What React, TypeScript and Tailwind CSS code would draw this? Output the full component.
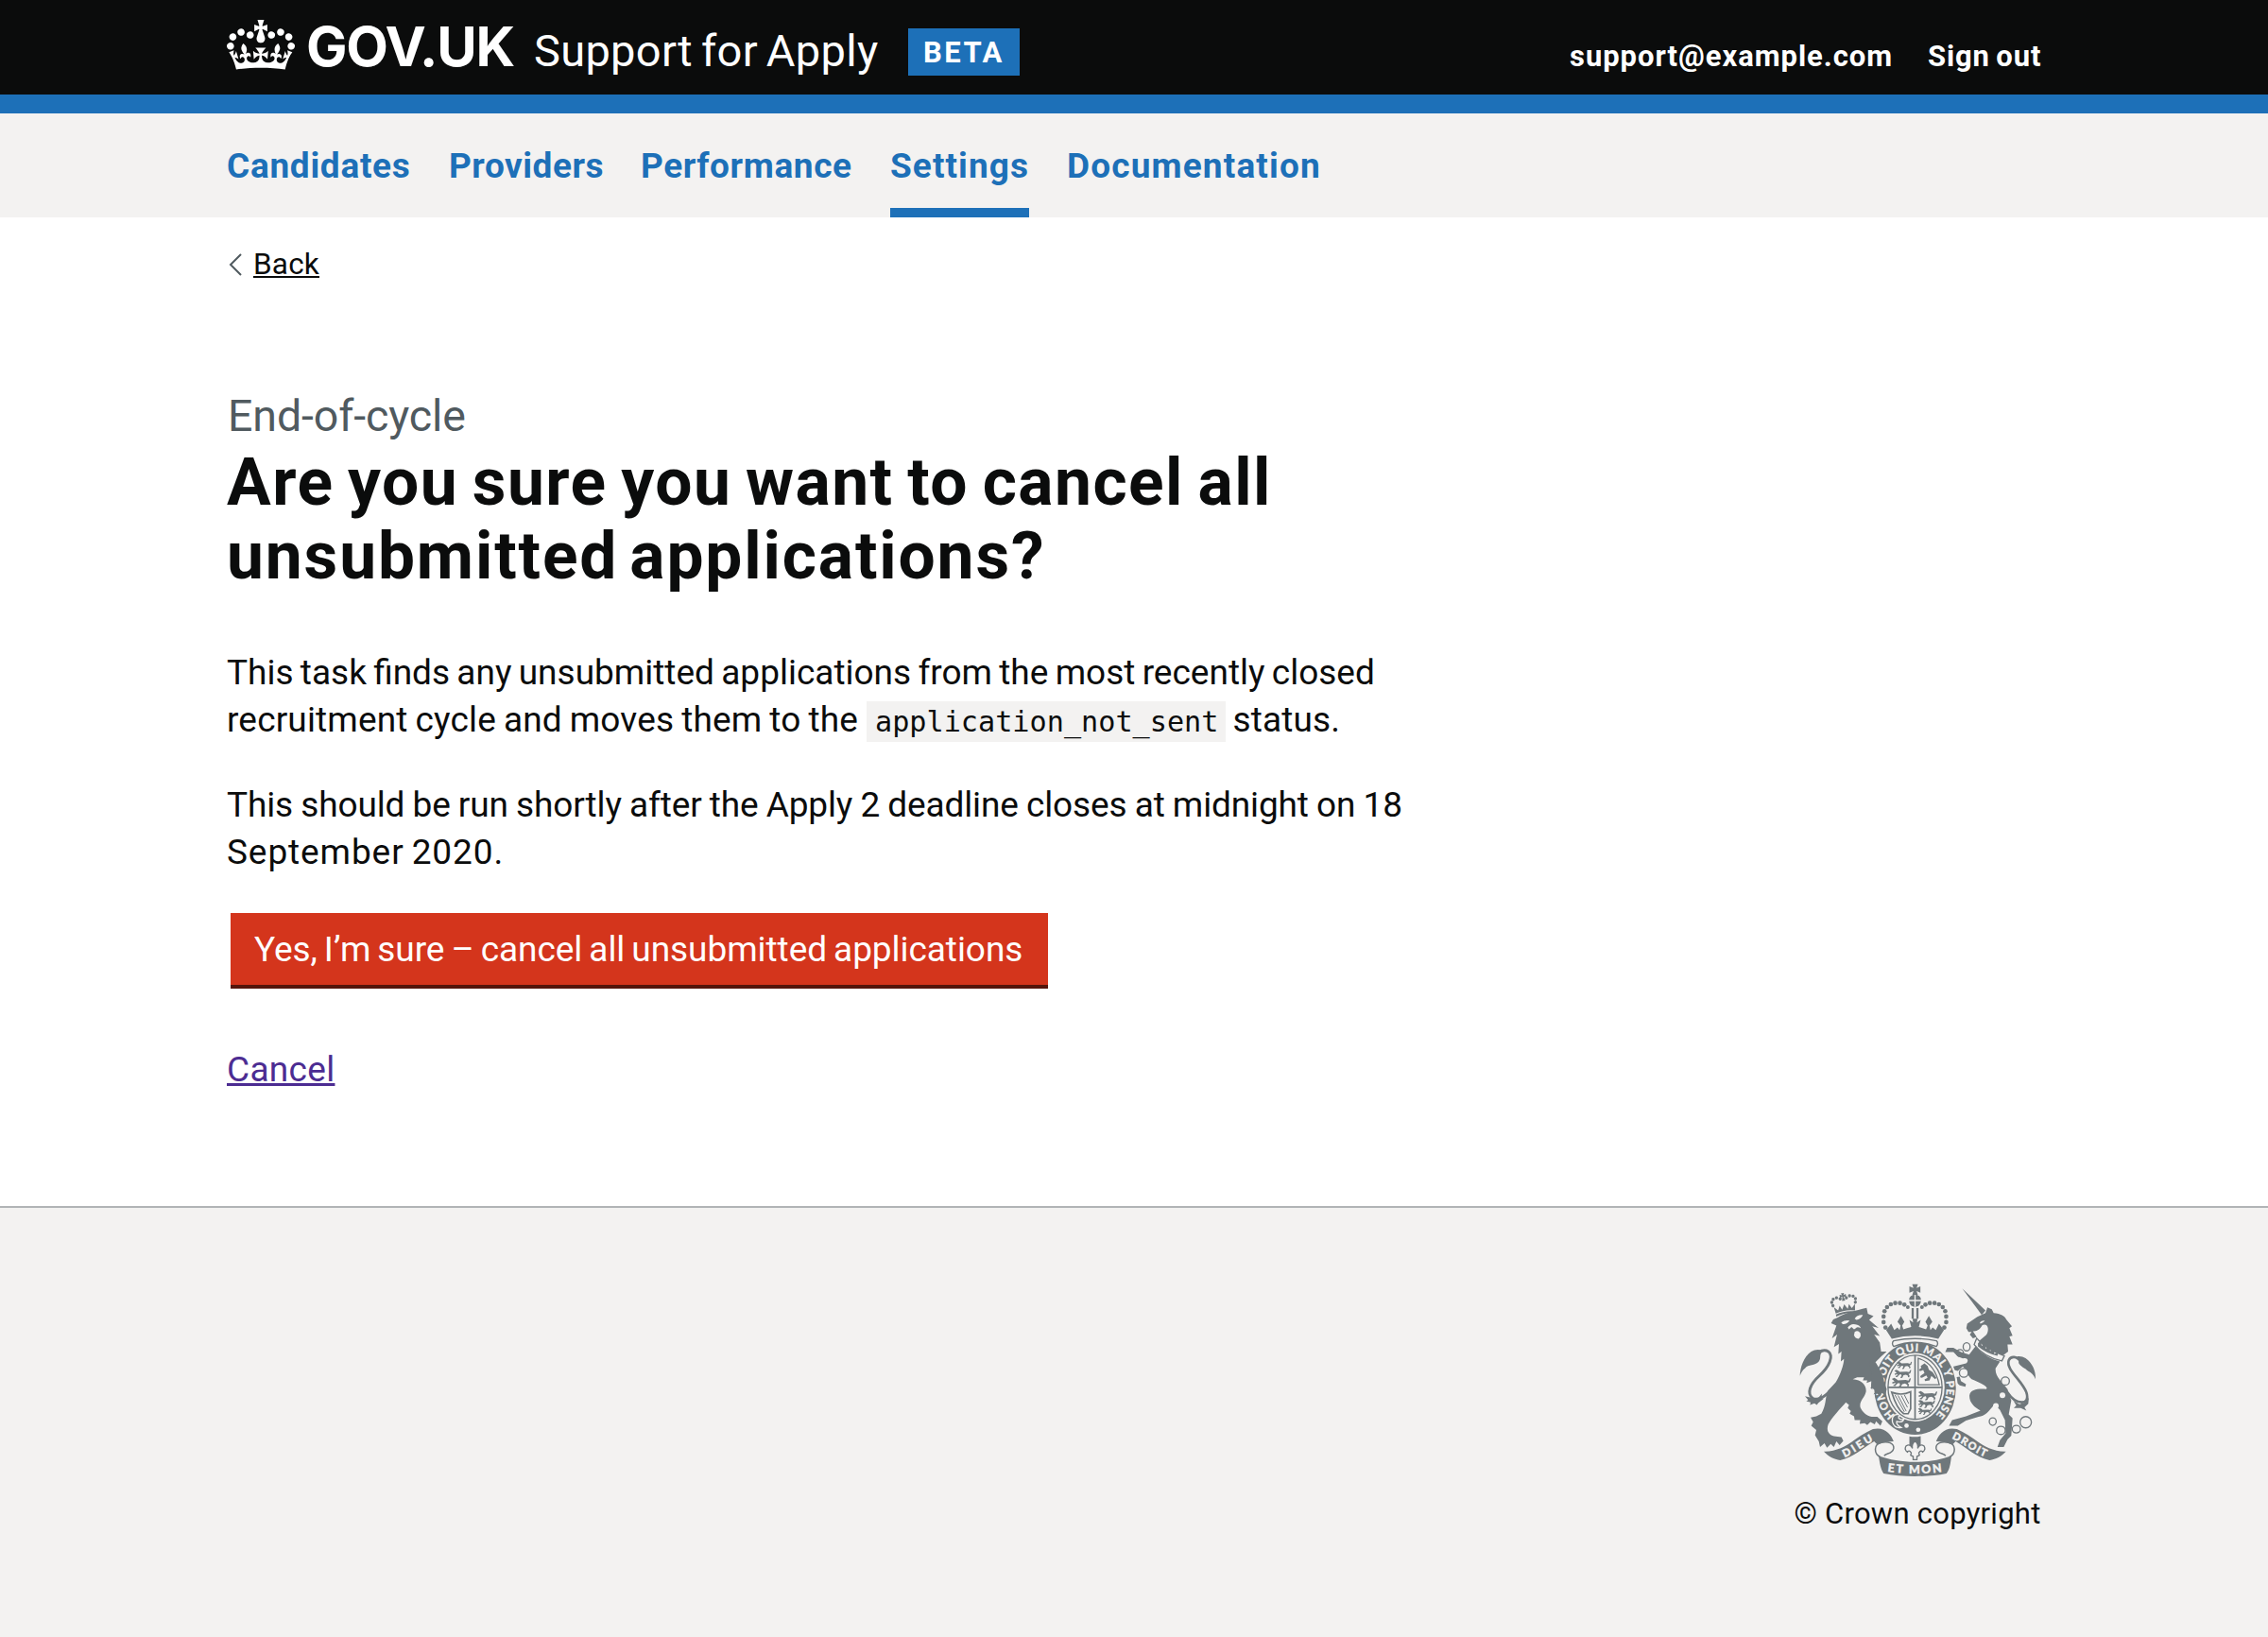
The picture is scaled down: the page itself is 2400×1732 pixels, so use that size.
import type { ReactNode } from "react";

const CROWN =
  "M25 30.2c3.5 1.5 7.7-.2 9.1-3.7 1.5-3.6-.2-7.8-3.9-9.2-3.6-1.4-7.6.3-9.1 3.9-1.4 3.5.3 7.5 3.9 9zM9 39.5c3.6 1.5 7.8-.2 9.2-3.7 1.5-3.6-.2-7.8-3.9-9.1-3.6-1.5-7.6.2-9.1 3.8-1.4 3.5.3 7.5 3.8 9zM4.4 57.2c3.5 1.5 7.7-.2 9.1-3.8 1.5-3.6-.2-7.7-3.9-9.1-3.5-1.5-7.6.3-9.1 3.8-1.4 3.5.3 7.6 3.9 9.1zm38.3-21.4c3.5 1.5 7.7-.2 9.1-3.8 1.5-3.6-.2-7.7-3.9-9.1-3.6-1.5-7.6.3-9.1 3.8-1.3 3.6.4 7.7 3.9 9.1zm64.4-5.6c-3.6 1.5-7.8-.2-9.1-3.7-1.5-3.6.2-7.8 3.8-9.2 3.6-1.4 7.7.3 9.2 3.9 1.3 3.5-.4 7.5-3.9 9zm15.9 9.3c-3.6 1.5-7.7-.2-9.1-3.7-1.5-3.6.2-7.8 3.7-9.1 3.6-1.5 7.7.2 9.2 3.8 1.5 3.5-.3 7.5-3.8 9zm4.7 17.7c-3.6 1.5-7.8-.2-9.2-3.8-1.5-3.6.2-7.7 3.9-9.1 3.6-1.5 7.7.3 9.2 3.8 1.3 3.5-.4 7.6-3.9 9.1zM89.3 35.8c-3.6 1.5-7.8-.2-9.2-3.8-1.4-3.6.2-7.7 3.9-9.1 3.6-1.5 7.7.3 9.2 3.8 1.4 3.6-.3 7.7-3.9 9.1zM69.7 17.7l8.9 4.7V9.3l-8.9 2.8c-.2-.3-.5-.6-.9-.9L72.4 0H59.6l3.5 11.2c-.3.3-.6.5-.9.9l-8.8-2.8v13.1l8.8-4.7c.3.3.6.7.9.9l-5 15.4v.1c-.2.8-.4 1.6-.4 2.4 0 4.1 3.1 7.5 7 8.1h.2c.3 0 .7.1 1 .1.4 0 .7 0 1-.1h.2c4-.6 7.1-4.1 7.1-8.1 0-.8-.1-1.7-.4-2.4V34l-5.1-15.4c.4-.2.7-.6 1-.9zM66 92.8c16.9 0 32.8 1.1 47.1 3.2 4-16.9 8.9-26.7 14-33.5l-9.6-3.4c1 4.9 1.1 7.2 0 10.2-1.5-1.4-3-4.3-4.2-8.7L108.6 76c2.8-2 5-3.2 7.5-3.3-4.4 9.4-10 11.9-13.6 11.2-4.3-.8-6.3-4.6-5.6-7.9 1-4.7 5.7-5.9 8-.5 4.3-8.7-3-11.4-7.6-8.8 7.1-7.2 7.9-13.5 2.1-21.1-8 6.1-8.1 12.3-4.5 20.8-4.7-5.4-12.1-2.5-9.5 6.2 3.4-5.2 7.9-2 7.2 3.1-.6 4.3-6.4 7.8-13.5 7.2-10.3-.9-10.9-8-11.2-13.8 2.5-.5 7.1 1.8 11 7.3L80.2 60c-4.1 4.4-8 5.3-12.3 5.4 1.4-4.4 8-11.6 8-11.6H55.5s6.4 7.2 7.9 11.6c-4.2-.1-8-1-12.3-5.4l1.4 16.4c3.9-5.5 8.5-7.7 10.9-7.3-.3 5.8-.9 12.8-11.1 13.8-7.2.6-12.9-2.9-13.5-7.2-.7-5 3.8-8.3 7.1-3.1 2.7-8.7-4.6-11.6-9.4-6.2 3.7-8.5 3.6-14.7-4.6-20.8-5.8 7.6-5 13.9 2.2 21.1-4.7-2.6-11.9.1-7.7 8.8 2.3-5.5 7.1-4.2 8.1.5.7 3.3-1.3 7.1-5.7 7.9-3.5.7-9-1.8-13.5-11.2 2.5.1 4.7 1.3 7.5 3.3l-4.7-15.4c-1.2 4.4-2.7 7.2-4.3 8.7-1.1-3-.9-5.3 0-10.2l-9.5 3.4c5 6.9 9.9 16.7 14 33.5 14.8-2.1 30.8-3.2 47.7-3.2z";

const INK = "#6f777b";
const PAPER = "#f3f2f1";

const ARCH_DOTS = [
  [344, 192, 7], [338, 175, 7], [338, 157, 7], [341, 140, 7], [349, 127, 7],
  [361, 118, 7], [375, 114, 7], [390, 114, 7], [404, 119, 7], [415, 127, 6],
];

const CHAIN = [
  [602, 253, 11, 13], [581, 273, 11, 11], [593, 336, 14, 14], [725, 362, 13, 13],
  [685, 491, 11, 12], [711, 519, 14, 13], [760, 515, 13, 12], [790, 493, 18, 18],
];

/* Small walking lion used in the quarters of the shield. */
function Passant({ x, y, s = 1 }: { x: number; y: number; s?: number }) {
  return (
    <path
      transform={`translate(${x} ${y}) scale(${s})`}
      d="M2 3l7-3 6 3 5 4 22-1 8 2 4-7 3 1-3 10-6 2 4 6-2 5-4-1 1-4-7-4-8 2-4 8-6 1 1-4 3-2-2-6-6 1-6 8-6-1 1-3 4-1 2-5-9 3-1-4 7-3z"
    />
  );
}

function RoyalArms() {
  return (
    <svg viewBox="70 52 754 616" className="h-[205px] w-[251px]" fill={INK} role="img" aria-label="Royal arms">
      {/* lion's crown */}
      <g transform="rotate(-9 213 120)">
        <path d="M182 143L179 122L191 134L198 120L204 134L213 118L222 134L228 120L235 134L247 122L244 143Q213 134 182 143Z" />
        <path d="M182 153Q213 142 244 153L244 146Q213 137 182 146Z" />
        {[[177, 117], [175, 106], [181, 97], [192, 94], [203, 99], [223, 99], [234, 94], [245, 97], [251, 106], [249, 117]].map(([x, y]) => (
          <circle key={x + "-" + y} cx={x} cy={y} r="5" />
        ))}
        <path d="M208 82h10l-3 7 8-3v10l-8-3 3 14h-10l3-14-8 3v-10l8 3z" />
      </g>

      {/* lion's tail */}
      <path d="M204 352C170 395 138 430 113 417C92 402 104 372 134 345C166 316 180 282 162 268C150 260 132 266 118 280" fill="none" stroke={INK} strokeWidth="9" />
      <path d="M72 346C72 320 84 284 108 268C120 260 140 260 148 268C130 272 142 288 132 300C120 314 98 308 88 322C80 328 76 336 72 346Z" />
      <path d="M88 410L104 414L128 418L142 402L140 418L148 418L130 432L126 438L118 433L104 438L106 430L92 426L98 422Z" />

      {/* lion */}
      <path d="M171 178L178 166L192 160C210 146 250 138 284 129L288 148L306 156L292 168L322 193L302 188L326 219L308 214L326 240L330 268L348 268L330 284L312 302C322 318 334 336 340 360L347 392L343 410L331 402L326 414L316 404L304 405L312 396L296 384L306 376L298 374L306 360L284 368L286 360L272 360L276 350L254 350L240 356C270 358 284 376 282 396C278 416 260 424 264 446C270 460 284 474 300 476L318 476L334 490L328 504L314 490L310 500L296 492L286 502L278 496L262 498L264 486L246 486L244 474L230 466L234 458L224 448L228 438L218 430C200 450 172 480 162 500C154 522 166 536 186 538L204 540L210 552L198 566L188 554L180 572L170 562L158 574L150 560L136 572L132 554L120 534L124 518L108 504L114 492L106 478L124 474L140 466C156 440 152 416 160 394L186 366C200 344 212 310 212 292L202 300L204 268L194 276L196 244L180 254L190 214L174 226L188 186Z" />
      <g fill={PAPER}>
        <path d="M203 176Q216 166 230 170Q222 182 208 181ZM246 164Q254 150 272 152Q268 164 252 168Z" />
        <path d="M224 192Q234 178 248 182Q262 184 266 194Q254 188 250 194L244 198L236 190L228 198Z" />
        <path d="M246 206Q256 198 264 210Q268 222 258 228Q246 226 244 216Z" />
      </g>

      {/* unicorn's tail */}
      <path d="M732 398C760 440 806 440 792 398C778 360 726 326 736 296C742 282 762 282 774 300" fill="none" stroke={INK} strokeWidth="8" />
      <path d="M762 284C794 278 824 318 821 356C814 336 800 334 790 324C776 316 764 308 768 298Z" />
      <path d="M750 424L770 436L790 430L800 414L798 434L786 446L792 456L774 448L752 448L760 440Z" />

      {/* unicorn */}
      <path d="M588 68L662 138L650 152Z" />
      <path d="M601 194L604 180L636 158L662 146L668 128L682 134L688 146C710 148 724 156 728 166L746 188L738 194L748 218L738 220L748 246L732 246L734 268L718 280C690 276 660 258 640 236L664 216C676 200 670 176 652 184C644 200 632 204 622 204L634 222L622 226L612 214L618 206L608 206Z" />
      <path d="M644 176Q650 168 660 170Q654 178 646 180Z" fill={PAPER} />
      <path d="M634 226C654 252 684 268 722 282L714 298C680 290 646 272 626 246Z" fill={PAPER} stroke={INK} strokeWidth="4" />
      <path d="M638 242l8-8 4 16 9-8 4 17 10-8 4 16 11-7 2 16 12-6-2 12q-36-8-62-30z" />
      <path d="M630 252C654 280 684 294 708 300L694 322C692 350 716 364 732 388L744 424L736 468L748 480L744 536L732 548L720 572L700 572L708 550L726 528L724 486L708 454L690 436C674 458 660 474 640 476L600 488L574 504L546 504L556 486L600 474L646 456C626 446 610 430 611 408C614 388 640 386 664 388C676 380 640 366 618 356C604 346 602 326 590 316L574 330L560 326L566 350L580 348L584 362L600 372L598 380L580 376L560 358L550 336L552 318L600 306C610 298 606 286 590 290L574 284L560 270L534 270L540 256L560 256L584 270L610 278Z" />
      <circle cx="716" cy="407" r="9" fill={PAPER} />
      <circle cx="695" cy="441" r="9" fill={PAPER} />
      {CHAIN.map(([x, y, rx, ry]) => (
        <ellipse key={x} cx={x} cy={y} rx={rx} ry={ry} fill={x === 593 || x === 725 ? PAPER : "none"} stroke={INK} strokeWidth="4" />
      ))}

      {/* garter */}
      <ellipse cx="438" cy="385" rx="136" ry="154" fill={PAPER} />
      <ellipse cx="438" cy="385" rx="130" ry="148" />
      <ellipse cx="438" cy="382" rx="94" ry="109" fill={PAPER} />
      <path id="garter" d="M373.7 471A100 115 0 0 1 438 268A100 115 0 0 1 495.4 477.2" fill="none" />
      <text fill={PAPER} stroke={PAPER} strokeWidth="1.2" fontSize="34" className="font-['Lato'] font-bold">
        <textPath href="#garter" textLength="530">HONI SOIT QUI MAL Y PENSE</textPath>
      </text>
      <circle cx="448" cy="517" r="7" fill={PAPER} />
      <circle cx="411" cy="504" r="7" fill={PAPER} />
      <path d="M382 468Q362 470 366 492Q372 514 394 510Q376 500 380 490Q398 496 402 484Q392 486 386 480Q384 474 390 470Z" fill={INK} stroke={PAPER} strokeWidth="4" />

      {/* lion's forepaw resting on the garter */}
      <path d="M292 300L314 306C326 324 338 344 340 366L348 388L343 408L333 400L326 412L318 402L306 404L314 394L298 382L300 340Z" />

      {/* shield */}
      <ellipse cx="438" cy="382" rx="86" ry="102" fill="none" stroke={INK} strokeWidth="4" />
      <path d="M438 280V484M352 382H524" stroke={INK} strokeWidth="5" />
      <Passant x={378} y={300} s={0.88} />
      <Passant x={370} y={326} s={0.98} />
      <Passant x={362} y={352} s={1.1} />
      <Passant x={446} y={394} s={1.1} />
      <Passant x={446} y={422} s={0.98} />
      <Passant x={446} y={448} s={0.8} />
      <path d="M448 290Q500 304 515 374H448Z" fill="none" stroke={INK} strokeWidth="4" />
      <path d="M456 314l12-8 10 8 4 12 12 8 12 18-4 4-12-10-6 14-14 2-2-5 10-5-4-8-14 8-6-2 2-5 12-8-4-10-10 4-4-5 8-6z" />
      <path d="M364 398Q396 410 424 396L424 450L416 466L402 466Q380 450 364 398Z" fill="none" stroke={INK} strokeWidth="5" />
      <path d="M374 406L404 460M384 408L410 458M394 408L414 446M404 406L418 434" stroke={INK} strokeWidth="3" />

      {/* centre crown */}
      <path d="M429 54h18l-4 12 12-5v20l-12-5 4 13h-18l4-13-13 5V61l13 5z" />
      <path d="M419 104a19 17 0 0 1 38 0zM419 108h38q-3 18-19 18t-19-18z" />
      <path d="M436 88h4v38h-4z" fill={PAPER} />
      <path d="M427 130h7v34h-7zM442 130h7v34h-7z" />
      {ARCH_DOTS.map(([x, y, r]) => (
        <g key={y + x}>
          <circle cx={x} cy={y} r={r} />
          <circle cx={875 - x} cy={y} r={r} />
        </g>
      ))}
      <path d="M346 200L362 180L372 200L382 192L389 200L392 186L382 174L393 155L404 174L397 186L401 198L412 194L426 190L420 168L432 176L430 164H446L444 176L456 168L450 190L462 194L473 198L478 186L471 174L482 155L493 174L484 186L487 200L494 192L504 200L514 180L530 200L512 228Q438 208 364 228Z" />
      <path d="M370 234Q438 220 506 234Q514 242 506 252Q438 226 370 252Q362 242 370 234Z" fill={PAPER} stroke={INK} strokeWidth="4" />

      {/* pendant */}
      <path d="M420 538Q438 542 456 537V572H420Z" />
      <path d="M438 552Q450 564 446 576Q454 560 466 568Q474 580 462 588Q458 580 450 590L452 598L444 602V612H432V602L424 598L426 590Q418 580 414 588Q402 580 410 568Q422 560 430 576Q426 564 438 552Z" fill={PAPER} stroke={INK} strokeWidth="4" />

      {/* motto scroll */}
      {[0, 1].map((side) => (
        <g key={side} transform={side ? "translate(875 0) scale(-1 1)" : undefined}>
          <path d="M328 604C306 594 306 562 330 558C352 552 372 560 370 576C366 596 344 590 340 600" fill={PAPER} stroke={INK} strokeWidth="4.5" />
          <path d="M148 586C214 588 252 536 304 515C342 506 362 532 370 554L340 556L318 564L308 554C276 572 242 606 200 614C180 610 162 602 148 586Z" />
        </g>
      ))}
      <path d="M322 600C390 626 484 626 554 600C550 628 548 644 538 656C480 668 396 668 338 656C328 642 326 622 322 600Z" />
      <path id="dieu" d="M214 605C246 592 274 566 318 546" fill="none" />
      <path id="etmon" d="M350 650Q438 662 526 650" fill="none" />
      <path id="droit" d="M554 544C598 563 628 592 668 606" fill="none" />
      <g fill={PAPER} stroke={PAPER} strokeWidth="1.2" className="font-['Lato'] font-black">
        <text fontSize="34"><textPath href="#dieu" textLength="106">DIEU</textPath></text>
        <text fontSize="37"><textPath href="#etmon" textLength="174">ET MON</textPath></text>
        <text fontSize="33"><textPath href="#droit" textLength="122">DROIT</textPath></text>
      </g>
    </svg>
  );
}

function NavItem({ children, className, active }: { children: ReactNode; className: string; active?: boolean }) {
  return (
    <a
      href="#"
      className={`block h-[110px] border-b-[10px] pt-[31px] text-[37px] leading-[50px] font-bold whitespace-nowrap text-[#1d70b8] ${
        active ? "border-[#1d70b8]" : "border-transparent"
      } ${className}`}
    >
      {children}
    </a>
  );
}

export default function App() {
  return (
    <div className="flex min-h-[1732px] w-[2400px] flex-col bg-white font-['Roboto',sans-serif] text-[#0b0c0c]">
      <header className="flex h-[120px] justify-between border-b-[20px] border-[#1d70b8] bg-[#0b0c0c] px-60 text-white">
        <div className="flex items-start">
          <svg viewBox="0 0 132 97" className="mt-[21px] h-[53px] w-[72px]" fill="currentColor" aria-hidden="true">
            <path d={CROWN} />
          </svg>
          <span className="mt-[19px] ml-[12px] w-[222px] font-['Inter'] text-[58px] leading-[60px] font-bold tracking-[-1.2px] whitespace-nowrap">
            GOV.UK
          </span>
          <span className="mt-[24px] ml-[19px] w-[364px] text-[47px] leading-[60px] tracking-[0.3px] whitespace-nowrap [word-spacing:-3px]">
            Support for Apply
          </span>
          <strong className="mt-[30px] ml-[32px] h-[50px] w-[118px] bg-[#1d70b8] pl-[16px] text-[31px] leading-[51px] font-bold tracking-[2.49px]">
            BETA
          </strong>
        </div>
        <div className="flex gap-[37px] pt-[40px] text-[31px] leading-[40px] font-bold whitespace-nowrap">
          <a href="#" className="w-[342px] tracking-[0.96px]">support@example.com</a>
          <a href="#" className="w-[120px] tracking-[0.85px] [word-spacing:-2px]">Sign out</a>
        </div>
      </header>

      <nav className="flex h-[110px] gap-10 bg-[#f3f2f1] px-60">
        <NavItem className="w-[195px] tracking-[0.7px]">Candidates</NavItem>
        <NavItem className="w-[163px] tracking-[0.52px]">Providers</NavItem>
        <NavItem className="w-[224px] tracking-[0.6px]">Performance</NavItem>
        <NavItem active className="w-[147px] tracking-[1.07px]">Settings</NavItem>
        <NavItem className="w-[269px] tracking-[1.15px]">Documentation</NavItem>
      </nav>

      <div className="flex items-center px-60 pt-[30px]">
        <svg viewBox="0 0 16 24" className="ml-[2px] h-6 w-4" fill="none" stroke="#505a5f" strokeWidth="2" aria-hidden="true">
          <path d="M13 1L2 12L13 23" />
        </svg>
        <a href="#" className="ml-[10px] text-[31.5px] leading-[40px] tracking-[0.2px] underline decoration-2 underline-offset-[2px]">
          Back
        </a>
      </div>

      <main className="w-[1560px] grow pt-[110px] pl-60">
        <h1 className="font-bold">
          <span className="block pl-[1px] text-[46.5px] leading-[60px] font-normal tracking-[-0.11px] text-[#505a5f]">End-of-cycle</span>
          <span className="mt-[2px] block text-[69.5px] leading-[78px] whitespace-nowrap">
            <span className="tracking-[1.45px] [word-spacing:-4px]">Are you sure you want to cancel all</span>
            <br />
            <span className="tracking-[1.85px] [word-spacing:-7px]">unsubmitted applications?</span>
          </span>
        </h1>

        <p className="mt-[59px] text-[37px] leading-[50px] whitespace-nowrap">
          <span className="tracking-[0px] [word-spacing:-1.9px]">This task finds any unsubmitted applications from the most recently closed</span>
          <br />
          <span className="tracking-[0.16px] [word-spacing:-1.4px]">recruitment cycle and moves them to the</span>
          <code className="ml-[9px] bg-[#f3f2f1] py-[4px] pr-[8px] pl-[9px] font-['DejaVu_Sans_Mono'] text-[30.2px] leading-[36px]">
            application_not_sent
          </code>
          <span className="ml-[7px] tracking-[0.14px]">status.</span>
        </p>
        <p className="mt-10 text-[37px] leading-[50px] whitespace-nowrap">
          <span className="tracking-[-0.12px] [word-spacing:-0.9px]">This should be run shortly after the Apply 2 deadline closes at midnight on 18</span>
          <br />
          <span className="tracking-[0.9px] [word-spacing:-2px]">September 2020.</span>
        </p>

        <button
          type="button"
          className="mt-[39px] ml-[4px] block h-[80px] w-[865px] border-b-4 border-[#55150b] bg-[#d4351c] pt-[2px] pl-[25px] text-left text-[37px] leading-[50px] tracking-[-0.05px] whitespace-nowrap text-white [word-spacing:-2.1px]"
        >
          Yes, I’m sure – cancel all unsubmitted applications
        </button>

        <p className="mt-[61px] text-[37px] leading-[50px]">
          <a href="#" className="tracking-[0.3px] text-[#4c2c92] underline decoration-[2.5px] underline-offset-[2px]">
            Cancel
          </a>
        </p>
      </main>

      <footer className="flex h-[456px] justify-end border-t-2 border-[#b1b4b6] bg-[#f3f2f1] px-60 pt-[80px]">
        <div className="flex w-[262px] flex-col items-center">
          <RoyalArms />
          <p className="mt-[19px] text-[31px] leading-[40px] tracking-[0.26px] whitespace-nowrap">© Crown copyright</p>
        </div>
      </footer>
    </div>
  );
}
